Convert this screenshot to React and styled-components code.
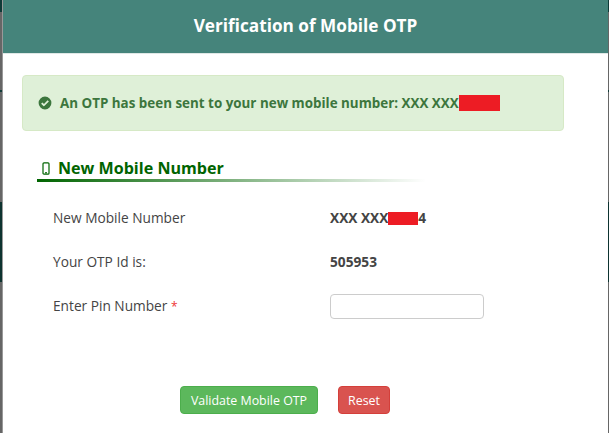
import styled, { createGlobalStyle } from 'styled-components';

const GlobalStyle = createGlobalStyle`
  html, body {
    margin: 0;
    height: 100%;
    overflow: hidden;
  }
  body {
    font-family: "Open Sans", "Noto Sans", sans-serif;
  }
`;

function SuccessIcon() {
  return (
    <svg width="14" height="14" viewBox="0 0 14 14">
      <path
        fill="#3c763d"
        fillRule="evenodd"
        d="M7 .6a6.400 6.400 0 1 0 0 12.800A6.400 6.400 0 0 0 7 .6Zm3.900 4.900-4.600 4.600-.7.1-2.500-2.500 1.300-1.300 1.600 1.600 3.600-3.800 1.300 1.300Z"
      />
    </svg>
  );
}

function PhoneIcon() {
  return (
    <svg width="8" height="13" viewBox="0 0 8 13">
      <rect x="1" y="0.8" width="6" height="11.400" rx="1" fill="none" stroke="#006400" strokeWidth="1.200" />
      <rect x="3" y="10.200" width="2" height="1.200" fill="#006400" />
    </svg>
  );
}

function App() {
  return (
    <>
      <GlobalStyle />
      <Page>
        <Modal>
          <ModalHeader>Verification of Mobile OTP</ModalHeader>
          <ModalBody>
            <Alert>
              <SuccessIcon />
              <span>An OTP has been sent to your new mobile number: XXX XXX</span>
              <Redacted $width="41px" $height="16px" />
            </Alert>
            <SectionTitle>
              <PhoneIcon />
              <span>New Mobile Number</span>
            </SectionTitle>
            <FormGrid>
              <Label>New Mobile Number</Label>
              <Value>
                XXX XXX
                <Redacted $width="30px" $height="13px" />
                4
              </Value>
              <Label>Your OTP Id is:</Label>
              <Value>505953</Value>
              <Label>
                Enter Pin Number <Required>*</Required>
              </Label>
              <PinInput type="text" />
            </FormGrid>
            <Actions>
              <Button $bg="#5cb85c" $border="#4cae4c" $width="138px">Validate Mobile OTP</Button>
              <Button $bg="#d9534f" $border="#d43f3a" $width="52px">Reset</Button>
            </Actions>
          </ModalBody>
        </Modal>
      </Page>
    </>
  );
}

const Page = styled.div`
  height: 433px;
  width: 609px;
  padding: 0 1px 0 2px;
  box-sizing: border-box;
  background: linear-gradient(
    to bottom,
    #0f3a37 0 12px,
    #666 12px 90px,
    #123c39 90px 92px,
    #666 92px 202px,
    #0d3330 202px 282px,
    #666 282px 433px
  );
`;

const Modal = styled.div`
  height: 100%;
  background: #fff;
  border-left: 1px solid #999;
  display: flex;
  flex-direction: column;
`;

const ModalHeader = styled.div`
  height: 54px;
  flex: none;
  box-sizing: border-box;
  background: #45847b;
  border-bottom: 1px solid #dfe8e6;
  color: #fff;
  font-size: 17.200px;
  font-weight: 700;
  line-height: 52px;
  text-align: center;
`;

const ModalBody = styled.div`
  padding: 21px 44px 0 19px;
`;

const Alert = styled.div`
  height: 56px;
  box-sizing: border-box;
  display: flex;
  align-items: center;
  padding: 0 15px;
  background: #dff0d8;
  border: 1px solid #d6e9c6;
  border-radius: 4px;
  color: #3c763d;
  font-size: 13.400px;
  font-weight: 700;

  svg {
    margin-right: 8px;
  }
`;

const Redacted = styled.span`
  display: inline-block;
  width: ${(p) => p.$width};
  height: ${(p) => p.$height};
  background: #ed1c24;
  vertical-align: middle;
`;

const SectionTitle = styled.div`
  width: 388px;
  margin: 24px 0 0 15px;
  padding: 2px 0 0 5px;
  height: 27px;
  display: flex;
  align-items: center;
  gap: 8px;
  color: #006400;
  font-size: 16.100px;
  font-weight: 700;
  border-bottom: 3px solid;
  border-image: linear-gradient(to right, #006400, #ffffff) 1;
  box-sizing: border-box;
`;

const FormGrid = styled.div`
  display: grid;
  grid-template-columns: 277px auto;
  grid-auto-rows: 44px;
  align-items: center;
  margin: 14px 0 0 31px;
  color: #444;
  font-size: 13.700px;
`;

const Label = styled.div`
  padding-bottom: 2px;
`;

const Value = styled.div`
  padding-bottom: 2px;
  font-weight: 700;
`;

const Required = styled.span`
  color: #e33;
  font-size: 12px;
`;

const PinInput = styled.input`
  width: 154px;
  height: 25px;
  box-sizing: border-box;
  border: 1px solid #ccc;
  border-radius: 4px;
  background: #fff;
  outline: none;
`;

const Actions = styled.div`
  display: flex;
  justify-content: flex-start;
  gap: 20px;
  margin: 58px 0 0 158px;
`;

const Button = styled.button`
  width: ${(p) => p.$width};
  height: 28px;
  padding: 0;
  background: ${(p) => p.$bg};
  border: 1px solid ${(p) => p.$border};
  border-radius: 4px;
  color: #fff;
  font-family: inherit;
  font-size: 12.400px;
`;

export default App;
